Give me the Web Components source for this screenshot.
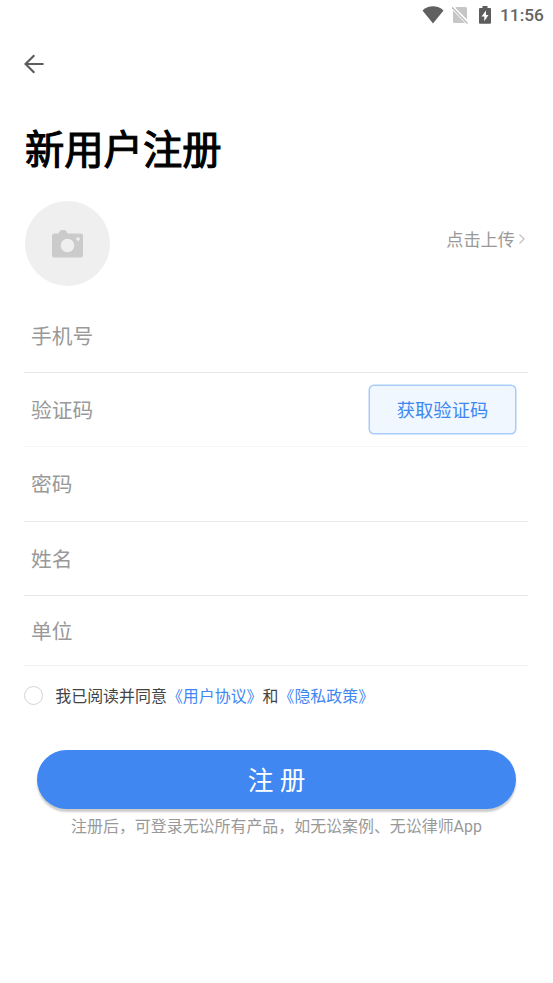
<!DOCTYPE html>
<html lang="zh-CN">
<head>
<meta charset="utf-8">
<title>新用户注册</title>
<style>
html,body{margin:0;background:#fff}
body{font-family:Roboto,"Noto Sans CJK SC",sans-serif;color:#444;width:553px;height:983px;overflow:hidden}
</style>
</head>
<body>
<register-page></register-page>
<script>
const define = (name, html) => {
  const t = document.createElement('template');
  t.innerHTML = html;
  customElements.define(name, class extends HTMLElement {
    constructor() {
      super();
      this.attachShadow({mode: 'open'}).append(t.content.cloneNode(true));
    }
  });
};

define('status-bar', `
<style>
:host{display:flex;height:32px;box-sizing:border-box;justify-content:flex-end;padding-right:10px;color:#606060}
svg{display:block;flex:none}
.wifi{margin:6px 8px 0 0}
.sim{margin:6px 11px 0 0}
.bat{margin:6px 9px 0 0}
span{font:500 17.3px/31px Roboto,sans-serif;color:#646464;width:43px;white-space:nowrap}
</style>
<svg class="wifi" width="22" height="18" viewBox="0 0 22 18"><path d="M.5 4.400C6.500-1.200 15.500-1.200 21.500 4.400L11 17.600Z" fill="#606060"/></svg>
<svg class="sim" width="16" height="18" viewBox="0 0 16 18"><path d="M4.700 1H13.500Q15 1 15 2.500V13.400L3.300 1.800ZM1 4.600L13 17H2.500Q1 17 1 15.500Z" fill="#c6c6c6"/><path d="M0 1.200L15.500 17.400" stroke="#bdbdbd" stroke-width="1.400"/></svg>
<svg class="bat" width="12" height="18" viewBox="0 0 12 18"><path d="M3.500 0H8.500V2H11Q12 2 12 3V16.800Q12 17.800 11 17.800H1Q0 17.800 0 16.800V3Q0 2 1 2H3.500Z" fill="#5d5d5d"/><path d="M7 4.500L2.500 10.500H5.300V15.300L9.500 9H7Z" fill="#fff"/></svg>
<span>11:56</span>`);

define('back-button', `
<style>:host{display:block;height:20px;padding:22px 0 0 24px}svg{display:block}</style>
<svg width="20" height="20" viewBox="0 0 20 20" fill="none" stroke="#5c5c5c" stroke-width="2.200"><path d="M19.500 10H2M10.300 1.200L1.500 10L10.300 18.800"/></svg>`);

define('avatar-upload', `
<style>
:host{display:flex;justify-content:space-between;height:85px;margin:0 28px 0 25px}
.circle{width:85px;height:85px;border-radius:50%;background:#efefef;display:grid;place-items:center}
.circle svg{display:block}
.link{display:flex;height:76px;align-items:center;font-size:17.2px;color:#999;gap:3px;margin-right:-1px}
.link span{margin-top:-1px}
</style>
<div class="circle"><svg width="32" height="28" viewBox="0 0 32 28"><path fill="#cbcbcb" fill-rule="evenodd" d="M2.500 3.500H6.500L7.500 1.500Q8.100 0 9.500 0H12.500Q13.900 0 14.500 1.500L15.500 3.500H28.500Q31 3.500 31 6V25Q31 27.500 28.500 27.500H2.500Q0 27.500 0 25V6Q0 3.500 2.500 3.500Z"/><circle cx="15.500" cy="15.500" r="6.800" fill="#efefef"/><circle cx="26" cy="9" r="1.800" fill="#efefef"/></svg></div>
<div class="link"><span><slot></slot></span><svg width="8" height="12" viewBox="0 0 8 12" fill="none" stroke="#c4c4c4" stroke-width="1.300"><path d="M1.500 1.500L6 6L1.500 10.500"/></svg></div>`);

define('form-field', `
<style>
:host{display:flex;align-items:center;justify-content:space-between;box-sizing:border-box;height:var(--h,74px);margin:0 25px 0 24px;padding:0 12px 0 7px;border-bottom:1px solid var(--line,#e8e8e8);font-size:20.7px;color:#999}
span{line-height:30px;padding-top:2px}
</style>
<span><slot></slot></span><slot name="action"></slot>`);

define('code-button', `
<style>
:host{display:flex;align-items:center;justify-content:center;box-sizing:border-box;width:147px;height:49px;margin-top:-1px;box-shadow:0 0 0 .5px #a9cbfa;border:1px solid #a9cbfa;border-radius:5px;background:#f0f7fe;color:#4088f1;font-size:18.3px}
</style><slot></slot>`);

define('terms-check', `
<style>
:host{display:flex;align-items:center;height:24px;margin:17px 0 0 24px;font-size:15.950px;color:#444;white-space:nowrap}
i{width:19px;height:19px;border:1px solid #d4d4d4;border-radius:50%;margin-right:12.300px;box-sizing:border-box}
div{margin-top:-1px}
::slotted(a){color:#3f87f2}
</style><i></i><div><slot></slot></div>`);

define('submit-button', `
<style>
:host{display:flex;align-items:center;justify-content:center;height:59px;margin:43px 37px 0;border-radius:30px;background:#4087f1;color:#fff;font-size:25.700px;box-shadow:0 3px 2px rgba(0,0,0,.2)}
span{margin-top:-2px}
</style><span><slot></slot></span>`);

define('register-page', `
<style>
:host{display:block}
h1{margin:48px 0 0 25px;height:79px;font-size:39.300px;line-height:59px;font-weight:400;color:#000;-webkit-text-stroke:1.100px #000}
.fields{display:block;padding-top:13px}
p{margin:6px 0 0;text-align:center;font-size:15.950px;line-height:24px;color:#999;white-space:nowrap}
</style>
<status-bar></status-bar>
<back-button></back-button>
<h1>新用户注册</h1>
<avatar-upload>点击上传</avatar-upload>
<div class="fields">
<form-field>手机号</form-field>
<form-field style="--line:#f7f7f7">验证码<code-button slot="action">获取验证码</code-button></form-field>
<form-field style="--h:75px">密码</form-field>
<form-field>姓名</form-field>
<form-field style="--h:70px;--line:#f3f3f3">单位</form-field>
</div>
<terms-check>我已阅读并同意<a>《用户协议》</a>和<a>《隐私政策》</a></terms-check>
<submit-button>注 册</submit-button>
<p>注册后，可登录无讼所有产品，如无讼案例、无讼律师App</p>`);
</script>
</body>
</html>
